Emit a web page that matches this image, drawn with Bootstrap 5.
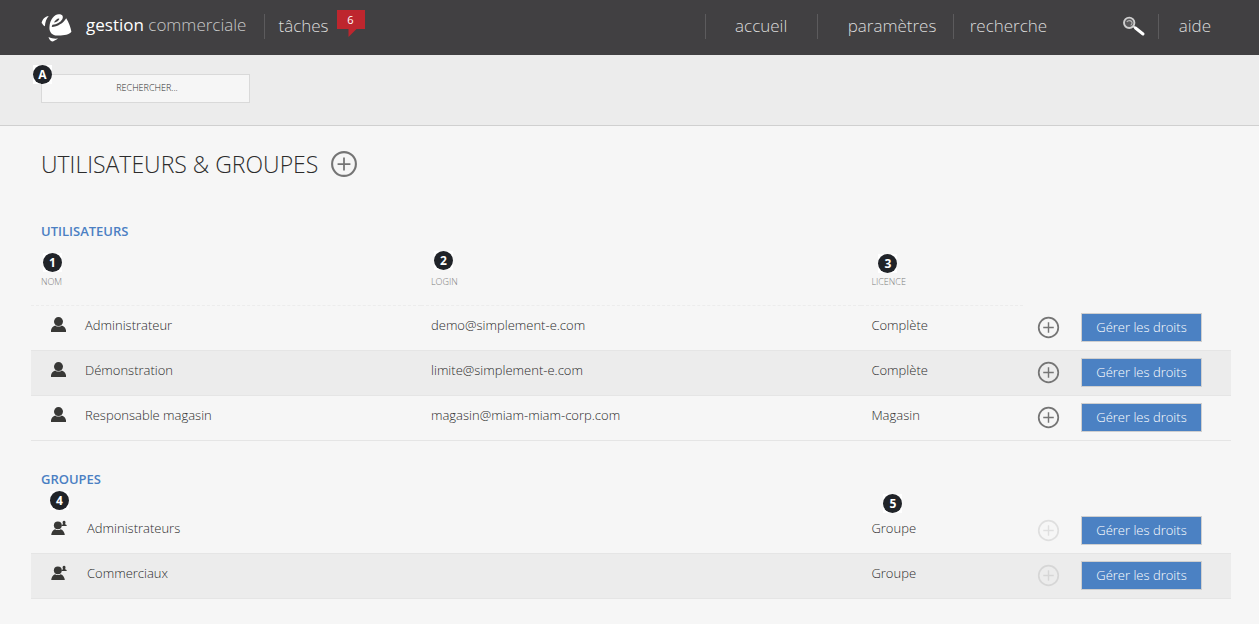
<!DOCTYPE html>
<html lang="fr">
<head>
<meta charset="utf-8">
<meta name="viewport" content="width=device-width, initial-scale=1">
<title>Gestion commerciale – Utilisateurs &amp; groupes</title>
<link href="https://cdn.jsdelivr.net/npm/bootstrap@5.3.0/dist/css/bootstrap.min.css" rel="stylesheet">
<style>
  body { background: #f6f6f6; color: #2c2c2c; font-family: "Open Sans", "Noto Sans", sans-serif; font-size: 13px; font-weight: 300; line-height: 20px; }
  a { text-decoration: none; }

  /* Top bar */
  .topbar { background: #414042; min-height: 55px; padding: 0 48px 2px 41px; font-size: 17px; line-height: 24px; }
  .topbar a { color: #dcdcdc; }
  .topbar .product { color: #c8c8c8; font-weight: 300; gap: 13px; }
  .topbar .product b { color: #fff; font-weight: 400; }
  .sep { border-left: 1px solid #5c5b5d; }
  .topbar .sep { height: 25px; }
  .tasks { padding-left: 13px; margin-left: 18px; }
  .bubble { position: relative; z-index: 0; width: 28px; height: 27px; margin: -6px 0 0 8px; color: #fff; font-size: 11px; line-height: 19px; font-weight: 400; text-align: center; }
  .bubble svg { position: absolute; inset: 0; z-index: -1; }
  .nav-home { width: 112px; text-align: center; }
  .nav-settings { width: 136px; padding-left: 30px; }
  .nav-search { width: 205px; padding-left: 16px; }
  .nav-search input { width: 130px; padding: 0 0 2px; border: 0; background: none; color: #dcdcdc; font-weight: 300; line-height: 24px; height: 24px; outline: 0; }
  .nav-search input::placeholder { color: #dcdcdc; opacity: 1; }
  .nav-help { padding-left: 20px; }

  /* Filter bar */
  .filterbar { background: #ececec; border-bottom: 1px solid #d0d0d0; padding: 19px 41px 22px; }
  .filter { width: 209px; }
  .filter input { width: 100%; height: 29px; border: 1px solid #d9d9d9; background: #f6f6f6; font-size: 9px; font-weight: 300; text-align: center; color: #2c2c2c; padding: 0 0 3px 3px; border-radius: 0; }
  .filter input::placeholder { color: #2c2c2c; opacity: 1; }

  /* Numbered markers laid over the page */
  .marker { position: absolute; width: 19px; height: 19px; background: #fff; z-index: 2; }
  .marker span { display: block; height: 19px; border-radius: 50%; background: #202328; color: #fff; font: 700 12px/19px "Open Sans", sans-serif; text-align: center; }
  .marker-filter { left: -8px; top: -9px; }
  .marker-name { left: 12px; top: 12px; }
  .marker-login { left: 13px; top: 10px; }
  .marker-licence { left: 17px; top: 13px; }
  .marker-group { left: 19px; top: -18px; }
  .marker-kind { left: 22px; top: -15px; }

  /* Content */
  main { padding: 20px 28px 24px 31px; }
  h1 { font-size: 23px; font-weight: 300; line-height: 36px; margin: 0; }
  h2 { font-size: 13px; font-weight: 600; line-height: 20px; color: #4b7fc3; margin: 0 10px; }
  .page-title { padding-left: 10px; gap: 12px; margin-bottom: 39px; }
  .add { border: 0; padding: 0; background: none; color: #757575; display: block; line-height: 0; }
  .add:disabled { color: rgba(0, 0, 0, .09); }
  .listing { width: 100%; table-layout: fixed; border-collapse: separate; border-spacing: 0; }
  .listing td, .listing th { position: relative; vertical-align: top; padding: 0 10px; }
  .listing th { height: 65px; padding-top: 32px; font-size: 9px; line-height: 18px; font-weight: 300; color: #7c7c7c; }
  .listing th.ruled { border-bottom: 1px dashed #ececec; }
  .listing td { height: 45px; padding-top: 9px; border-bottom: 1px solid #e5e5e5; }
  .listing tbody tr:nth-child(even) { background: #ececec; }
  .listing td.pick { padding: 10px 0 0 14px; }
  .listing td.act { padding: 7px 0 0; }
  .person { width: 17px; height: 16px; margin: 2px 18px 0 19px; color: #383836; flex: none; }
  .listing td.who { padding-left: 0; }
  .groups { margin-top: 20px; }
  .groups h2 { padding: 8px 0 20px; }
  .groups .person { margin-right: 20px; }
  .c-name { width: 32.5%; } .c-login { width: 36.7%; } .c-kind { width: 13.5%; } .c-add { width: 4.8%; }
  .rights { width: 121px; height: 29px; border: 1px solid #cfcfcf; border-radius: 0; background: #4b81c3; color: #fff; font-size: 13px; font-weight: 300; line-height: 20px; padding: 0 0 2px; }
  .rights:hover { background: #3f73b3; color: #fff; }
</style>
</head>
<body>
<svg class="d-none" aria-hidden="true">
  <symbol id="plus" viewBox="0 0 24 24"><circle cx="12" cy="12" r="10.2" fill="none" stroke="currentColor" stroke-width="1.8"/><path d="M12 6.500v11M6.500 12h11" stroke="currentColor" stroke-width="1.500"/></symbol>
  <symbol id="user" viewBox="0 0 17 16"><circle cx="8.500" cy="4.600" r="4.500" fill="currentColor"/><path d="M1 15V13.300C1.300 10.800 3 9 5.300 8.400 6.800 10 10.200 10 11.700 8.400 14 9 15.700 10.800 16 13.300V15Z" fill="currentColor"/></symbol>
  <symbol id="users" viewBox="0 0 18 16"><circle cx="8.300" cy="5.200" r="4.200" fill="currentColor"/><path d="M1.300 15.500C1.500 12 3.300 10 5.300 9.200 7 10.400 9.600 10.400 11.300 9.200 13.800 10 15.500 12.500 15.700 15.500Z" fill="currentColor"/><path d="M12.300 5.900C12.500 4.600 13 4.200 13.800 3.900 12.900 1.800 13.400.2 14.900.2S16.900 1.800 16 3.900C17 4.200 17.600 4.600 17.800 5.900Z" fill="currentColor"/></symbol>
</svg>

<header class="topbar d-flex align-items-center">
  <a href="#" class="product d-flex align-items-center">
    <svg width="32" height="32" viewBox="0 0 32 32" class="flex-shrink-0" aria-hidden="true">
      <g fill="#fff">
        <path d="M.6 12C1.300 8 4 5.500 7.700 4.900 5.300 7.700 4.200 10.500 3.900 15.300 2.500 14.600 1.700 13.500 1.200 12.500Z"/>
        <path d="M8.500 15.500C9 9 13 3.600 17.800 3.300 21.500 3.200 22.700 5.500 21.300 8.200 19.300 11.500 15.800 13.200 11.500 13.800 11 14.600 10.900 15.200 10.800 16 16.500 15.500 22.300 12.300 25.200 7.200 27.800 11.500 29.800 16.700 30.400 20.700 28 23.900 21 24.900 14.500 24.400 10 23.700 8 20 8.500 15.500Z"/>
        <path d="M7.500 26.100C10.500 27.500 13.500 27.900 17 27.600 14.300 29.200 12.700 30.500 11.300 30.500 9.500 30.300 8.200 28.500 7.500 26.100Z"/>
      </g>
      <path d="M13 11.400C14 9.200 16.500 7.200 18 7.400 19 8.200 16.700 10.700 13 11.400Z" fill="#414042"/>
    </svg>
    <span class="pb-1"><b>gestion</b> commerciale</span>
  </a>
  <a href="#" class="tasks sep">tâches</a>
  <span class="bubble"><svg width="28" height="27" viewBox="0 0 28 27" aria-hidden="true"><path d="M0 0H28V19H19.500L11.500 27V19H0Z" fill="#be262e"/></svg>6</span>
  <nav class="d-flex align-items-center ms-auto">
    <a href="#" class="nav-home sep">accueil</a>
    <a href="#" class="nav-settings sep">paramètres</a>
    <form class="nav-search sep d-flex align-items-center justify-content-between">
      <input type="text" placeholder="recherche" aria-label="recherche">
      <button type="submit" class="btn p-0 border-0 lh-1 me-2" aria-label="Lancer la recherche">
        <svg width="28" height="22" viewBox="0 0 28 22"><circle cx="7.200" cy="6.800" r="5.200" fill="#59585a" stroke="#cfcfcf" stroke-width="1.900"/><path d="M4.800 5.800C6 4.200 8.500 4.200 9.600 5.700S9.600 8.800 8.600 9.300" fill="none" stroke="#b5b5b5" stroke-width="1.200"/><path d="M11.300 10.300L13.500 12" stroke="#dcdcdc" stroke-width="2"/><path d="M13.500 12L21 18" stroke="#fff" stroke-width="3" stroke-linecap="round"/></svg>
      </button>
    </form>
    <a href="#" class="nav-help sep">aide</a>
  </nav>
</header>

<section class="filterbar">
  <div class="filter position-relative">
    <i class="marker marker-filter"><span>A</span></i>
    <input type="text" class="d-block" placeholder="RECHERCHER..." aria-label="Rechercher">
  </div>
</section>

<main>
  <div class="page-title d-flex align-items-center">
    <h1>UTILISATEURS &amp; GROUPES</h1>
    <button type="button" class="add" aria-label="Ajouter"><svg width="28" height="28"><use href="#plus"/></svg></button>
  </div>

  <h2>UTILISATEURS</h2>
  <table class="listing">
    <colgroup><col class="c-name"><col class="c-login"><col class="c-kind"><col class="c-add"><col></colgroup>
    <thead>
      <tr>
        <th class="ruled"><i class="marker marker-name"><span>1</span></i>NOM</th>
        <th class="ruled"><i class="marker marker-login"><span>2</span></i>LOGIN</th>
        <th class="ruled"><i class="marker marker-licence"><span>3</span></i>LICENCE</th>
        <th></th><th></th>
      </tr>
    </thead>
    <tbody>
      <tr>
        <td class="who"><div class="d-flex"><svg class="person"><use href="#user"/></svg>Administrateur</div></td>
        <td>demo@simplement-e.com</td><td>Complète</td>
        <td class="pick"><button type="button" class="add" aria-label="Ajouter"><svg width="23" height="23"><use href="#plus"/></svg></button></td>
        <td class="act"><button type="button" class="btn rights">Gérer les droits</button></td>
      </tr>
      <tr>
        <td class="who"><div class="d-flex"><svg class="person"><use href="#user"/></svg>Démonstration</div></td>
        <td>limite@simplement-e.com</td><td>Complète</td>
        <td class="pick"><button type="button" class="add" aria-label="Ajouter"><svg width="23" height="23"><use href="#plus"/></svg></button></td>
        <td class="act"><button type="button" class="btn rights">Gérer les droits</button></td>
      </tr>
      <tr>
        <td class="who"><div class="d-flex"><svg class="person"><use href="#user"/></svg>Responsable magasin</div></td>
        <td>magasin@miam-miam-corp.com</td><td>Magasin</td>
        <td class="pick"><button type="button" class="add" aria-label="Ajouter"><svg width="23" height="23"><use href="#plus"/></svg></button></td>
        <td class="act"><button type="button" class="btn rights">Gérer les droits</button></td>
      </tr>
    </tbody>
  </table>

  <div class="groups">
    <h2>GROUPES</h2>
    <table class="listing">
      <colgroup><col class="c-name"><col class="c-login"><col class="c-kind"><col class="c-add"><col></colgroup>
      <tbody>
        <tr>
          <td class="who"><i class="marker marker-group"><span>4</span></i><div class="d-flex"><svg class="person"><use href="#users"/></svg>Administrateurs</div></td>
          <td></td><td><i class="marker marker-kind"><span>5</span></i>Groupe</td>
          <td class="pick"><button type="button" class="add" aria-label="Ajouter" disabled><svg width="23" height="23"><use href="#plus"/></svg></button></td>
          <td class="act"><button type="button" class="btn rights">Gérer les droits</button></td>
        </tr>
        <tr>
          <td class="who"><div class="d-flex"><svg class="person"><use href="#users"/></svg>Commerciaux</div></td>
          <td></td><td>Groupe</td>
          <td class="pick"><button type="button" class="add" aria-label="Ajouter" disabled><svg width="23" height="23"><use href="#plus"/></svg></button></td>
          <td class="act"><button type="button" class="btn rights">Gérer les droits</button></td>
        </tr>
      </tbody>
    </table>
  </div>
</main>
<script src="https://cdn.jsdelivr.net/npm/bootstrap@5.3.0/dist/js/bootstrap.bundle.min.js"></script>
</body>
</html>
